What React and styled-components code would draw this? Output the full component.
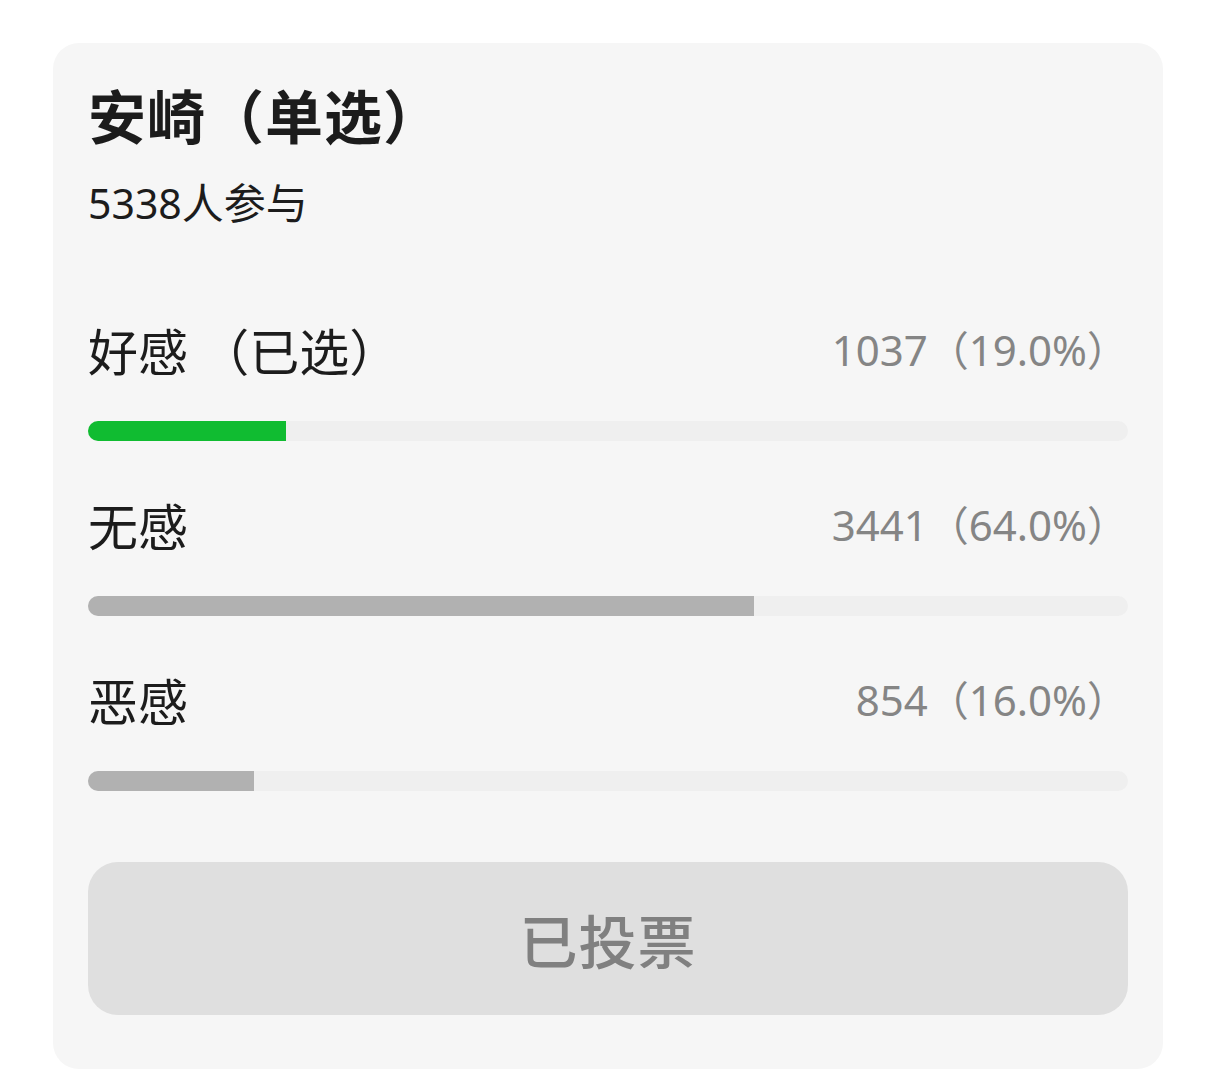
import React from "react";
import styled, { createGlobalStyle } from "styled-components";

const GlobalStyle = createGlobalStyle`
  html, body {
    margin: 0;
    padding: 0;
    background: #ffffff;
  }
  body {
    font-family: "Noto Sans CJK SC", "Noto Sans", sans-serif;
    -webkit-font-smoothing: antialiased;
  }
`;

const Page = styled.div`
  padding: 43px 53px 7px 53px;
`;

const Card = styled.section`
  width: 1110px;
  box-sizing: border-box;
  background: #f6f6f6;
  border-radius: 26px;
  padding: 42px 35px 54px 35px;
  display: flex;
  flex-direction: column;
`;

const Title = styled.h1`
  margin: 0;
  font-size: 58px;
  line-height: 58px;
  height: 58px;
  font-weight: 700;
  color: #1c1c1c;
  letter-spacing: 1px;
`;

const Subtitle = styled.div`
  margin-top: 37px;
  height: 41px;
  font-family: "Noto Sans", "Noto Sans CJK SC", sans-serif;
  font-size: 41px;
  line-height: 41px;
  color: #1c1c1c;
  & > span {
    font-family: "Noto Sans CJK SC", sans-serif;
    font-size: 42px;
  }
`;

const Options = styled.div`
  margin-top: 103px;
  display: flex;
  flex-direction: column;
  gap: 58px;
`;

const Option = styled.div`
  display: flex;
  flex-direction: column;
  gap: 47px;
`;

const Header = styled.div`
  display: flex;
  justify-content: space-between;
  align-items: center;
  height: 50px;
`;

const Label = styled.span`
  font-size: 50px;
  line-height: 50px;
  color: #1c1c1c;
  white-space: pre;
`;

const Value = styled.span`
  font-family: "Noto Sans", "Noto Sans CJK SC", sans-serif;
  font-size: 42px;
  line-height: 42px;
  color: #858585;
  white-space: pre;
`;

const Paren = styled.span`
  font-family: "Noto Sans CJK SC", sans-serif;
  font-size: 41px;
`;

const Track = styled.div`
  height: 20px;
  border-radius: 10px;
  background: #efefef;
  overflow: hidden;
  display: flex;
`;

const Fill = styled.div`
  height: 100%;
  background: ${(p) => (p.$selected ? "#10bc31" : "#b1b1b1")};
`;

const VoteButton = styled.button`
  margin-top: 71px;
  height: 153px;
  border: none;
  border-radius: 30px;
  background: #dfdfdf;
  color: #808080;
  font-family: "Noto Sans CJK SC", "Noto Sans", sans-serif;
  font-size: 58px;
  font-weight: 500;
  letter-spacing: 1px;
  cursor: default;
  padding: 0;
`;

const options = [
  { label: "好感 （已选）", count: 1037, pct: 19.0, selected: true },
  { label: "无感", count: 3441, pct: 64.0 },
  { label: "恶感", count: 854, pct: 16.0 },
];

export default function App() {
  return (
    <>
      <GlobalStyle />
      <Page>
        <Card>
          <Title>安崎（单选）</Title>
          <Subtitle>
            5338<span>人参与</span>
          </Subtitle>
          <Options>
            {options.map((o) => (
              <Option key={o.label}>
                <Header>
                  <Label>{o.label}</Label>
                  <Value>
                    {o.count}
                    <Paren>（</Paren>
                    {o.pct.toFixed(1)}%
                    <Paren>）</Paren>
                  </Value>
                </Header>
                <Track>
                  <Fill $selected={o.selected} style={{ width: `${o.pct}%` }} />
                </Track>
              </Option>
            ))}
          </Options>
          <VoteButton disabled>已投票</VoteButton>
        </Card>
      </Page>
    </>
  );
}
